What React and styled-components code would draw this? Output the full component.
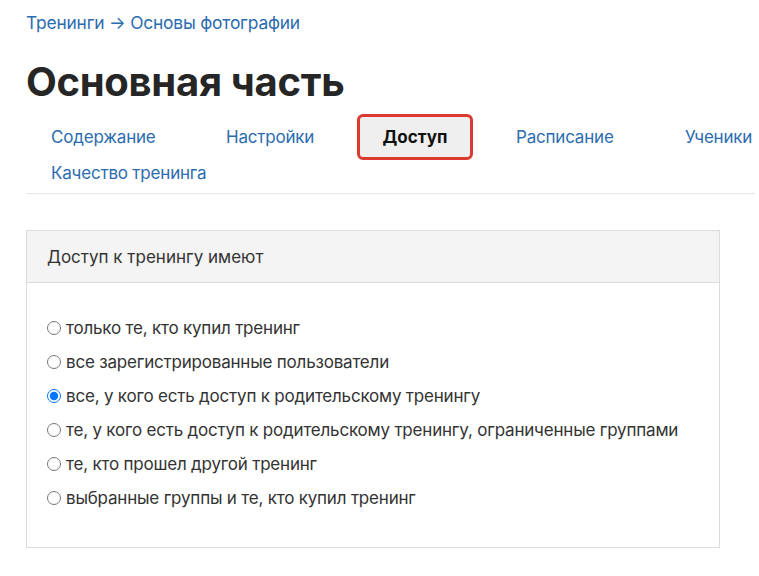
import React from "react";
import styled, { createGlobalStyle } from "styled-components";

const G = createGlobalStyle`
  body { margin: 0; background: #fff; font-family: Inter, "Noto Sans", sans-serif; }
`;
const Page = styled.div`padding: 12px 4px 0 26px;`;
const Crumbs = styled.div`font-size: 17.4px; color: #2b6cb0; letter-spacing: -0.2px;`;
const Title = styled.h1`font-size: 40px; font-weight: 700; color: #262626; margin: 25px 0 0; letter-spacing: -0.3px; line-height: 1.2;`;
const Tabs = styled.div`
  display: flex; flex-wrap: wrap; width: 729px; border-bottom: 1px solid #e6e6e6;
  padding-bottom: 2px; margin-top: 13px;
`;
const Tab = styled.div`
  width: ${p => p.$w}px; box-sizing: border-box; height: 36px; display: flex; align-items: center;
  padding-left: 25px; font-size: 17px; color: #2b6cb0; letter-spacing: -0.2px;
`;
const Active = styled.div`
  display: flex; align-items: center; justify-content: center;
  width: ${p => p.$w}px; height: 46px; box-sizing: border-box; margin: -5px 18px -5px 0;
  border: 3px solid #dc3a30; border-radius: 6px; background: #efefef;
  font-weight: 700; font-size: 17px; color: #111;
`;
const Card = styled.div`
  margin-top: 36px; width: 694px; border: 1px solid #dcdcdc; box-sizing: border-box;
`;
const CardHead = styled.div`
  background: #f4f4f4; border-bottom: 1px solid #dcdcdc; height: 51px; display: flex;
  align-items: center; padding-left: 20px; font-size: 17px; color: #333;
`;
const Body = styled.div`padding: 33px 20px 38px; display: flex; flex-direction: column; gap: 11px;`;
const Opt = styled.label`
  display: flex; align-items: center; font-size: 17px; color: #333; height: 23px; letter-spacing: -0.2px;
  input { margin: 0 5px 0 0; width: 14px; height: 14px; }
`;
const opts = [
  "только те, кто купил тренинг",
  "все зарегистрированные пользователи",
  "все, у кого есть доступ к родительскому тренингу",
  "те, у кого есть доступ к родительскому тренингу, ограниченные группами",
  "те, кто прошел другой тренинг",
  "выбранные группы и те, кто купил тренинг",
];
export default function App() {
  return (
    <Page>
      <G />
      <Crumbs>Тренинги → Основы фотографии</Crumbs>
      <Title>Основная часть</Title>
      <Tabs>
        <Tab $w={175}>Содержание</Tab>
        <Tab $w={156}>Настройки</Tab>
        <Active $w={116}>Доступ</Active>
        <Tab $w={169}>Расписание</Tab>
        <Tab $w={95}>Ученики</Tab>
        <Tab $w={250}>Качество тренинга</Tab>
      </Tabs>
      <Card>
        <CardHead>Доступ к тренингу имеют</CardHead>
        <Body>
          {opts.map((o, i) => (
            <Opt key={i}><input type="radio" name="a" defaultChecked={i === 2} />{o}</Opt>
          ))}
        </Body>
      </Card>
    </Page>
  );
}
